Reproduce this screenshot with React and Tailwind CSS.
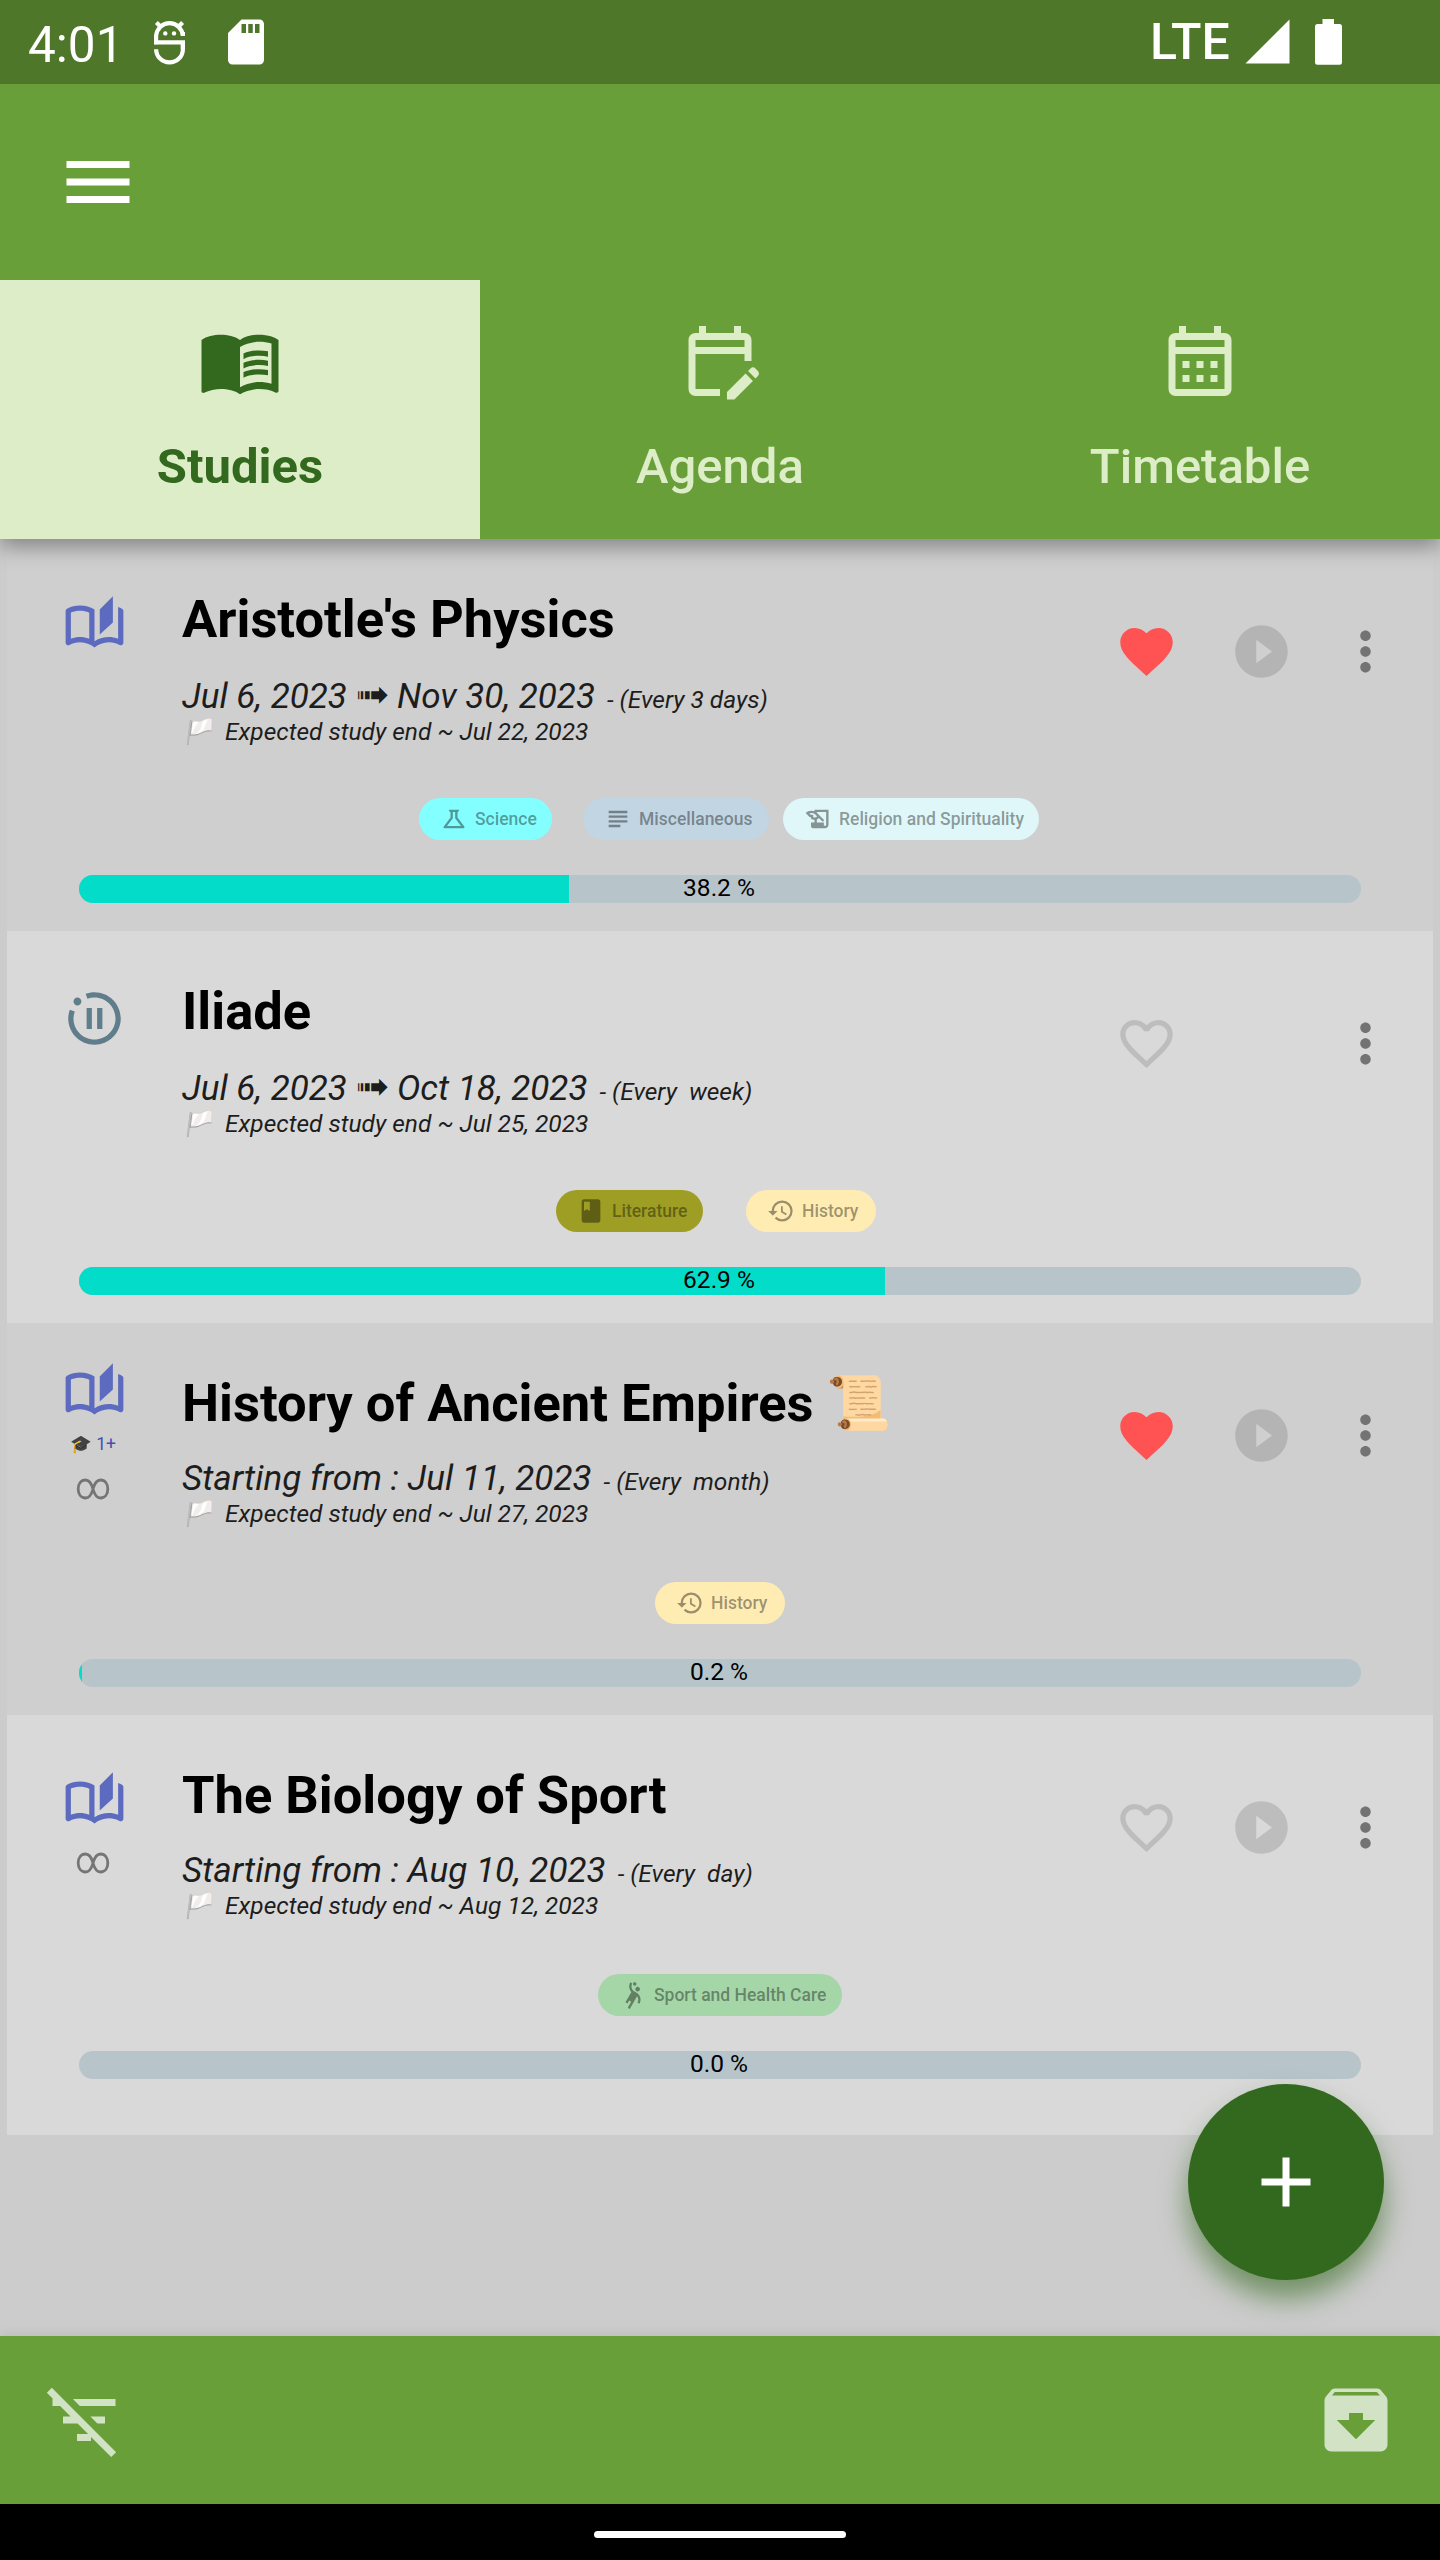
import {
  MdAdd,
  MdArchive,
  MdClass,
  MdFavorite,
  MdFavoriteBorder,
  MdFilterListOff,
  MdHistory,
  MdHistoryEdu,
  MdMenu,
  MdMenuBook,
  MdMoreVert,
  MdOutlineAutoStories,
  MdOutlineCalendarMonth,
  MdOutlineEditCalendar,
  MdOutlineMotionPhotosPaused,
  MdOutlineScience,
  MdPlayCircleFilled,
  MdSdCard,
  MdSportsHandball,
  MdSubject,
} from "react-icons/md";

const studies = [
  {
    title: "Aristotle's Physics",
    status: "active",
    from: "Jul 6, 2023",
    to: "Nov 30, 2023",
    every: "- (Every 3 days)",
    end: "Expected study end ~ Jul 22, 2023",
    favorite: true,
    playable: true,
    progress: 38.2,
    tags: [
      { label: "Science", Icon: MdOutlineScience, cls: "bg-[#84ffff] w-[133px] mr-[31px]" },
      { label: "Miscellaneous", Icon: MdSubject, cls: "bg-[#c1d5e3] w-[186px] mr-[14px]" },
      { label: "Religion and Spirituality", Icon: MdHistoryEdu, cls: "bg-[#dff7f8] w-[256px]" },
    ],
    tagRow: "pl-[412px]",
  },
  {
    title: "Iliade",
    status: "paused",
    from: "Jul 6, 2023",
    to: "Oct 18, 2023",
    every: "- (Every  week)",
    end: "Expected study end ~ Jul 25, 2023",
    favorite: false,
    playable: false,
    progress: 62.9,
    tags: [
      { label: "Literature", Icon: MdClass, cls: "bg-[#9e9d24] w-[147px] mr-[43px]" },
      { label: "History", Icon: MdHistory, cls: "bg-[#ffecb3] w-[130px]" },
    ],
    tagRow: "pl-[549px]",
  },
  {
    title: "History of Ancient Empires 📜",
    status: "active",
    graduated: "1+",
    endless: true,
    from: "Starting from : Jul 11, 2023",
    every: "- (Every  month)",
    end: "Expected study end ~ Jul 27, 2023",
    favorite: true,
    playable: true,
    progress: 0.2,
    tags: [{ label: "History", Icon: MdHistory, cls: "bg-[#ffecb3] w-[130px]" }],
    tagRow: "pl-[648px]",
  },
  {
    title: "The Biology of Sport",
    status: "active",
    endless: true,
    from: "Starting from : Aug 10, 2023",
    every: "- (Every  day)",
    end: "Expected study end ~ Aug 12, 2023",
    favorite: false,
    playable: true,
    progress: 0,
    tags: [{ label: "Sport and Health Care", Icon: MdSportsHandball, cls: "bg-[#a5d6a7] w-[244px]" }],
    tagRow: "pl-[591px]",
  },
];

function DebugIcon() {
  return (
    <svg className="h-[46px] w-[32px]" viewBox="0 0 32 46" fill="none" stroke="#fff">
      <path d="M2.100 25.300V16.500a13.500 14 0 0 1 26.800 0" strokeWidth="4.2" />
      <path d="M0 23.300H28.900V30.200a13.400 13.200 0 0 1-26.800 0" strokeWidth="4.2" />
      <path d="M28.900 23v7M28.900 16.900V13M2.400 3.500l4 4M28.600 3.500l-4 4" strokeWidth="4.2" />
      <circle cx="11.300" cy="14.400" r="2.200" fill="#fff" stroke="none" />
      <circle cx="20" cy="14.400" r="2.200" fill="#fff" stroke="none" />
    </svg>
  );
}

function StatusBar() {
  return (
    <div className="flex h-[84px] items-start bg-[#4f772a] text-white">
      <span className="ml-[28px] mt-[16px] w-[126px] text-[49.5px] leading-[58px]">4:01</span>
      <div className="mt-[19px]">
        <DebugIcon />
      </div>
      <MdSdCard className="ml-[33px] mt-[15px] size-[54px]" />
      <span className="ml-auto mt-[13px] w-[95px] text-[50px] leading-[58px] font-medium">LTE</span>
      <svg className="mt-[19px] h-[46px] w-[97px]" viewBox="0 0 97 46" fill="#fff">
        <path d="M44.500 .5V44.500H.5z" />
        <path d="M77.500 0h11.500v5h5.500a2.500 2.500 0 0 1 2.500 2.500v35.700a2.500 2.500 0 0 1-2.500 2.500h-22a2.500 2.500 0 0 1-2.500-2.500V7.500a2.500 2.500 0 0 1 2.500-2.500h5z" />
      </svg>
      <span className="w-[98px]" />
    </div>
  );
}

function Tab({ Icon, label, active }) {
  return (
    <div
      className={
        active
          ? "flex flex-1 flex-col items-center bg-[#dcedc8] font-bold text-[#33691e]"
          : "flex flex-1 flex-col items-center font-medium text-[#dcedc8]"
      }
    >
      <Icon className="mt-[39px] size-[84px]" />
      <span className="mt-[35px] text-[49px] leading-[58px]">{label}</span>
    </div>
  );
}

function Tag({ label, Icon, cls }) {
  return (
    <div className={`flex h-[42px] shrink-0 items-center rounded-full pl-[21px] ${cls}`}>
      <Icon className="size-[28px] shrink-0 text-black/40" />
      <span className="ml-[7px] text-[17.5px] leading-[21px] font-medium whitespace-nowrap text-black/40">{label}</span>
    </div>
  );
}

function Study({ study, index }) {
  const alt = index % 2 === 1;
  const compact = Boolean(study.graduated);
  return (
    <section className={`mx-[7px] h-[392px] last:h-[420px] ${alt ? "bg-[#d9d9d9]" : "bg-[#cfcfcf]"}`}>
      <div className="flex h-[259px]">
        <div
          className={`flex w-[175px] shrink-0 flex-col items-start pl-[56px] ${compact ? "pt-[39px]" : "pt-[56px]"}`}
        >
          {study.status === "active" ? (
            <MdOutlineAutoStories className="size-[63px] text-[#5c6bc0]" />
          ) : (
            <MdOutlineMotionPhotosPaused className="size-[63px] text-[#607d8b]" />
          )}
          {compact && (
            <span className="mt-[9px] ml-[7px] text-[17.5px] leading-[21px] whitespace-nowrap text-[#3f51b5]">
              🎓 {study.graduated}
            </span>
          )}
          {study.endless && (
            <svg
              className={`ml-[13px] h-[22px] w-[34px] ${compact ? "mt-[23px]" : "mt-[18px]"}`}
              viewBox="0 0 34 22"
              fill="none"
              stroke="#757575"
              strokeWidth="2.8"
            >
              <path d="M17 11C15.500 5.500 13.500 2 9.500 2C5 2 2.200 5.800 2.200 11S5 20 9.500 20C13.500 20 15.500 16.500 17 11C18.500 5.500 20.500 2 24.500 2C29 2 31.800 5.800 31.800 11S29 20 24.500 20C20.500 20 18.500 16.500 17 11Z" />
            </svg>
          )}
        </div>
        <div className="flex w-[933px] shrink-0 flex-col pt-[50px] whitespace-pre">
          <h2 className="text-[52.5px] leading-[60px] font-bold text-black">{study.title}</h2>
          <p
            className={`flex h-[41px] items-baseline text-[35px] leading-[41px] text-[#1d1d1d] italic ${
              study.endless ? "mt-[25px]" : "mt-[27px]"
            }`}
          >
            {study.from}
            {study.to && <span className="ml-[9px] w-[41px] text-[40px] leading-[30px]">➟</span>}
            {study.to}
            <span className="ml-[12px] text-[24.5px]">{study.every}</span>
          </p>
          <p className="flex text-[24.500px] leading-[29px] text-[#1d1d1d] italic">
            <span className="w-[43px]">🏳️</span>
            {study.end}
          </p>
        </div>
        <div className="flex pt-[81px]">
          {study.favorite ? (
            <MdFavorite className="size-[63px] text-[#ff5252]" />
          ) : (
            <MdFavoriteBorder className="size-[63px] text-[#bdbdbd]" />
          )}
          <MdPlayCircleFilled
            className={`ml-[52px] size-[63px] ${study.playable ? "text-black/13" : "invisible"}`}
          />
          <MdMoreVert className="ml-[41px] size-[63px] text-[#737373]" />
        </div>
      </div>
      <div className={`flex h-[77px] ${study.tagRow}`}>
        {study.tags.map((tag) => (
          <Tag key={tag.label} {...tag} />
        ))}
      </div>
      <div className="ml-[72px] grid h-[28px] w-[1282px]">
        <div className="col-start-1 row-start-1 h-[28px] overflow-hidden rounded-full bg-[#b7c5cb]">
          <div className="h-full bg-[#03dcc9]" style={{ width: `${study.progress}%` }} />
        </div>
        <span className="z-10 col-start-1 row-start-1 pr-[2px] text-center text-[24.5px] leading-[25px] text-black">
          {study.progress.toFixed(1)} %
        </span>
      </div>
    </section>
  );
}

export default function App() {
  return (
    <div className="relative flex h-[2560px] w-[1440px] flex-col overflow-hidden bg-[#cccccc] font-['Roboto','Noto_Color_Emoji','DejaVu_Sans',sans-serif]">
      <header className="relative bg-[#689f38] shadow-[0_8px_20px_rgba(0,0,0,0.36)]">
        <StatusBar />
        <div className="flex h-[196px] pt-[56px] pl-[56px]">
          <MdMenu className="size-[84px] text-white" />
        </div>
        <nav className="flex h-[259px]">
          <Tab Icon={MdMenuBook} label="Studies" active />
          <Tab Icon={MdOutlineEditCalendar} label="Agenda" />
          <Tab Icon={MdOutlineCalendarMonth} label="Timetable" />
        </nav>
      </header>
      <main className="flex-1">
        {studies.map((study, i) => (
          <Study key={study.title} study={study} index={i} />
        ))}
      </main>
      <button className="absolute top-[2084px] left-[1188px] flex size-[196px] items-center justify-center rounded-full bg-[#33691e] shadow-[0_18px_28px_rgba(51,105,30,0.6)]">
        <MdAdd className="size-[84px] text-white" />
      </button>
      <footer className="flex h-[168px] items-center justify-between bg-[#689f38] px-[42px] text-[#d2e3c5] shadow-[0_-2px_10px_rgba(0,0,0,0.08)]">
        <MdFilterListOff className="size-[84px]" />
        <MdArchive className="size-[84px]" />
      </footer>
      <div className="flex h-[56px] items-center justify-center bg-black">
        <div className="mt-[5px] h-[7px] w-[252px] rounded-full bg-white" />
      </div>
    </div>
  );
}
